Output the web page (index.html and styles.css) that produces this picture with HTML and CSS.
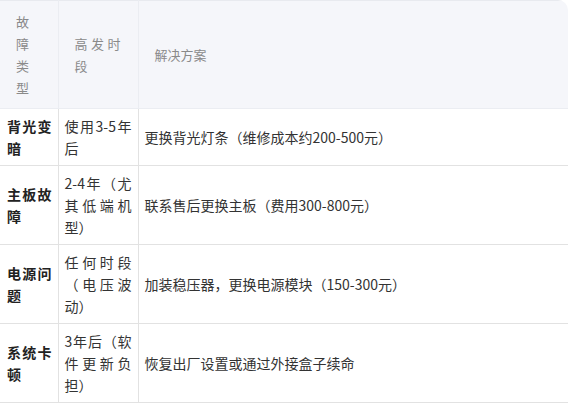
FILE: index.html
```html
<!DOCTYPE html>
<html lang="zh-CN">
<head>
    <meta charset="UTF-8">
    <meta name="viewport" content="width=device-width, initial-scale=1.0">
    <title>故障类型与解决方案</title>
    <link rel="stylesheet" href="styles.css">
</head>
<body>
    <div class="table-wrap">
        <table class="fault-table">
            <colgroup>
                <col class="col-type">
                <col class="col-time">
                <col>
            </colgroup>
            <thead>
                <tr>
                    <th>故障类型</th>
                    <th>高发时段</th>
                    <th>解决方案</th>
                </tr>
            </thead>
            <tbody>
                <tr>
                    <td class="type">背光变暗</td>
                    <td>使用3-5年后</td>
                    <td>更换背光灯条（维修成本约200-500元）</td>
                </tr>
                <tr>
                    <td class="type">主板故障</td>
                    <td>2-4年（尤其低端机型）</td>
                    <td>联系售后更换主板（费用300-800元）</td>
                </tr>
                <tr>
                    <td class="type">电源问题</td>
                    <td>任何时段（电压波动）</td>
                    <td>加装稳压器，更换电源模块（150-300元）</td>
                </tr>
                <tr>
                    <td class="type">系统卡顿</td>
                    <td>3年后（软件更新负担）</td>
                    <td>恢复出厂设置或通过外接盒子续命</td>
                </tr>
            </tbody>
        </table>
    </div>
</body>
</html>
```

FILE: styles.css
```css
body {
    margin: 0;
    background: #fff;
    font-family: "Noto Sans CJK SC", "Noto Sans", sans-serif;
}
.table-wrap {
    width: 568px;
    border-top-right-radius: 10px;
    overflow: hidden;
}
.fault-table {
    width: 100%;
    border-collapse: collapse;
    table-layout: fixed;
}
.col-type {
    width: 58px;
}
.col-time {
    width: 80px;
}
.fault-table th {
    background: #f5f6fa;
    color: #8a8a8a;
    font-size: 13px;
    font-weight: normal;
    line-height: 22px;
    padding: 10px 17px 9px 16px;
    text-align: justify;
    border: 1px solid #ebedf2;
    border-top-color: #e8eaef;
}
.fault-table td {
    color: #333;
    font-size: 14px;
    line-height: 22px;
    padding: 6px;
    text-align: justify;
    vertical-align: middle;
    border: 1px solid #e2e2e2;
}
.fault-table tr > :first-child {
    border-left: none;
}
.fault-table tr > :last-child {
    border-right: none;
}
.fault-table td.type {
    font-weight: bold;
    color: #222;
    padding-left: 7px;
}
```
